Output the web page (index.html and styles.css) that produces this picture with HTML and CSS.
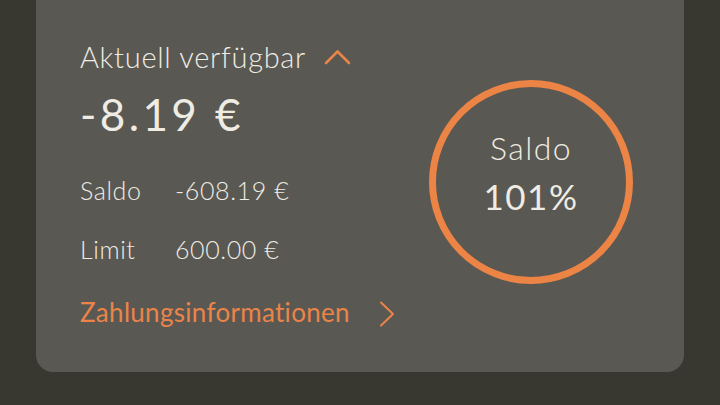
FILE: index.html
```html
<!DOCTYPE html>
<html lang="de">
<head>
<meta charset="utf-8">
<link rel="stylesheet" href="styles.css">
</head>
<body>
<div class="page">
  <section class="card">
    <div class="info">
      <div class="head">
        <span class="head-label">Aktuell verfügbar</span>
        <svg class="chev-up" width="27" height="16" viewBox="0 0 27 16"><path d="M2 14 L13.5 2.5 L25 14" fill="none" stroke="#ea8449" stroke-width="2.6" stroke-linecap="round" stroke-linejoin="round"/></svg>
      </div>
      <div class="amount">-8.19 €</div>
      <div class="rows">
        <div class="row"><span class="key">Saldo</span><span class="val">-608.19 €</span></div>
        <div class="row"><span class="key">Limit</span><span class="val">600.00 €</span></div>
      </div>
      <a class="link">
        <span class="link-text">Zahlungsinformationen</span>
        <svg class="chev-right" width="16" height="28" viewBox="0 0 16 28"><path d="M2 2.5 L14 14 L2 25.5" fill="none" stroke="#ea8449" stroke-width="2" stroke-linecap="round" stroke-linejoin="round"/></svg>
      </a>
    </div>
    <div class="gauge">
      <div class="gauge-label">Saldo</div>
      <div class="gauge-value">101%</div>
    </div>
  </section>
</div>
</body>
</html>
```
FILE: styles.css
```css
html, body {
  margin: 0;
  padding: 0;
}
body {
  background: #383730;
  font-family: "Lato", "Noto Sans", sans-serif;
  color: #efece4;
  width: 720px;
  height: 405px;
  overflow: hidden;
}
.page {
  padding: 0 36px;
}
.card {
  margin-top: -20px;
  height: 392px;
  background: #5a5852;
  border-radius: 0 0 17px 17px;
  box-sizing: border-box;
  padding: 57px 51px 0 44px;
  display: flex;
  justify-content: space-between;
  align-items: flex-start;
}
.info {
  display: flex;
  flex-direction: column;
}
.head {
  display: flex;
  align-items: center;
  gap: 18px;
  height: 40px;
}
.head-label {
  font-size: 29px;
  font-weight: 300;
  line-height: 40px;
  letter-spacing: 0.7px;
}
.amount {
  font-size: 44px;
  font-weight: 400;
  line-height: 50px;
  margin-top: 12px;
  letter-spacing: 3.4px;
}
.rows {
  margin-top: 36px;
  display: flex;
  flex-direction: column;
  gap: 29px;
}
.row {
  display: flex;
  font-size: 25px;
  font-weight: 300;
  line-height: 30px;
  letter-spacing: 0.6px;
}
.key {
  width: 95px;
}
.link {
  margin-top: 31px;
  display: flex;
  align-items: center;
  gap: 29px;
  color: #ea8449;
  font-size: 26px;
  font-weight: 400;
  line-height: 34px;
  letter-spacing: 0.3px;
}
.chev-right {
  margin-top: 3px;
}
.gauge {
  margin-top: 43px;
  width: 204px;
  height: 204px;
  box-sizing: border-box;
  border: 7px solid #ec8446;
  border-radius: 50%;
  padding-top: 41px;
  display: flex;
  flex-direction: column;
  align-items: center;
}
.gauge-label {
  font-size: 32px;
  font-weight: 300;
  line-height: 40px;
  letter-spacing: 1.4px;
}
.gauge-value {
  margin-top: 6px;
  font-size: 35px;
  font-weight: 400;
  line-height: 44px;
  letter-spacing: 1.5px;
}
```
